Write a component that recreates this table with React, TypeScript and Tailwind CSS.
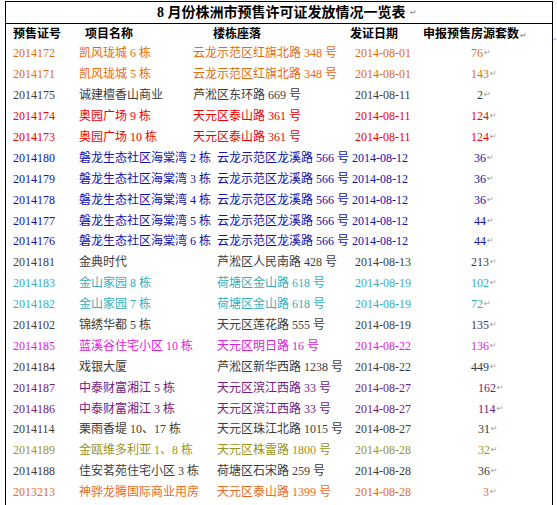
const ORANGE = "text-[#e36c0a]";
const GRAY = "text-[#3c3c3c]";
const RED = "text-[#f00000]";
const BLUE = "text-[#1010b0]";
const TEAL = "text-[#35aebb]";
const PINK = "text-[#e020d8]";
const PURPLE = "text-[#70207a]";
const OLIVE = "text-[#9a9420]";
const ORANGE2 = "text-[#ec6a22]";

// tab stop widths differ per block of rows, like the Word doc they came from
const A = { c2: "w-[114px]", c3: "w-[162px]", c4: "w-[116px]" };
const B = { c2: "w-[138px]", c3: "w-[135px]", c4: "w-[122px]" };
const C = { c2: "w-[138px]", c3: "w-[138px]", c4: "w-[116px]" };
const D = { c2: "w-[138px]", c3: "w-[138px]", c4: "w-[123px]" };

type Row = {
  id: string;
  name: string;
  addr: string;
  date: string;
  n: string;
  color: string;
  tabs: typeof A;
  pad?: string;
};

const rows: Row[] = [
  { id: "2014172", name: "凯风珑城 6 栋", addr: "云龙示范区红旗北路 348 号", date: "2014-08-01", n: "76", color: ORANGE, tabs: A },
  { id: "2014171", name: "凯风珑城 5 栋", addr: "云龙示范区红旗北路 348 号", date: "2014-08-01", n: "143", color: ORANGE, tabs: A },
  { id: "2014175", name: "诚建檀香山商业", addr: "芦淞区东环路 669 号", date: "2014-08-11", n: "2", color: GRAY, tabs: A, pad: "pl-[6px]" },
  { id: "2014174", name: "奥园广场 9 栋", addr: "天元区泰山路 361 号", date: "2014-08-11", n: "124", color: RED, tabs: A },
  { id: "2014173", name: "奥园广场 10 栋", addr: "天元区泰山路 361 号", date: "2014-08-11", n: "124", color: RED, tabs: A },
  { id: "2014180", name: "磐龙生态社区海棠湾 2 栋", addr: "云龙示范区龙溪路 566 号", date: "2014-08-12", n: "36", color: BLUE, tabs: B },
  { id: "2014179", name: "磐龙生态社区海棠湾 3 栋", addr: "云龙示范区龙溪路 566 号", date: "2014-08-12", n: "36", color: BLUE, tabs: B },
  { id: "2014178", name: "磐龙生态社区海棠湾 4 栋", addr: "云龙示范区龙溪路 566 号", date: "2014-08-12", n: "36", color: BLUE, tabs: B },
  { id: "2014177", name: "磐龙生态社区海棠湾 5 栋", addr: "云龙示范区龙溪路 566 号", date: "2014-08-12", n: "44", color: BLUE, tabs: B },
  { id: "2014176", name: "磐龙生态社区海棠湾 6 栋", addr: "云龙示范区龙溪路 566 号", date: "2014-08-12", n: "44", color: BLUE, tabs: B },
  { id: "2014181", name: "金典时代", addr: "芦淞区人民南路 428 号", date: "2014-08-13", n: "213", color: GRAY, tabs: C },
  { id: "2014183", name: "金山家园 8 栋", addr: "荷塘区金山路 618 号", date: "2014-08-19", n: "102", color: TEAL, tabs: C },
  { id: "2014182", name: "金山家园 7 栋", addr: "荷塘区金山路 618 号", date: "2014-08-19", n: "72", color: TEAL, tabs: C },
  { id: "2014102", name: "锦绣华都 5 栋", addr: "天元区莲花路 555 号", date: "2014-08-19", n: "135", color: GRAY, tabs: C },
  { id: "2014185", name: "蓝溪谷住宅小区 10 栋", addr: "天元区明日路 16 号", date: "2014-08-22", n: "136", color: PINK, tabs: C },
  { id: "2014184", name: "戏银大厦", addr: "芦淞区新华西路 1238 号", date: "2014-08-22", n: "449", color: GRAY, tabs: C },
  { id: "2014187", name: "中泰财富湘江 5 栋", addr: "天元区滨江西路 33 号", date: "2014-08-27", n: "162", color: PURPLE, tabs: D },
  { id: "2014186", name: "中泰财富湘江 3 栋", addr: "天元区滨江西路 33 号", date: "2014-08-27", n: "114", color: PURPLE, tabs: D },
  { id: "2014114", name: "栗雨香堤 10、17 栋", addr: "天元区珠江北路 1015 号", date: "2014-08-27", n: "31", color: GRAY, tabs: D },
  { id: "2014189", name: "金瓯维多利亚 1、8 栋", addr: "天元区株雷路 1800 号", date: "2014-08-28", n: "32", color: OLIVE, tabs: D },
  { id: "2014188", name: "佳安茗苑住宅小区 3 栋", addr: "荷塘区石宋路 259 号", date: "2014-08-28", n: "36", color: GRAY, tabs: D },
  { id: "2013213", name: "神骅龙腾国际商业用房", addr: "天元区泰山路 1399 号", date: "2014-08-28", n: "3", color: ORANGE2, tabs: D, pad: "pl-[5px]" },
];

function Mark() {
  return <span className="font-['DejaVu_Sans'] text-[8px] text-[#9a9a9a] ml-[1px]">↵</span>;
}

export default function App() {
  return (
    <div className="w-[557px] h-[505px] overflow-hidden bg-white pt-[1px] flex font-['Liberation_Serif','Noto_Sans_CJK_SC',serif] text-[12px] leading-none">
      <div className="ml-[5px] w-[548px] shrink-0 border-t border-x border-black">
        <div className="h-[22px] border-b border-black flex items-center pl-[151px] pt-[1px] text-[14px] font-bold text-black whitespace-pre">
          8 月份株洲市预售许可证发放情况一览表 <Mark />
        </div>
        <div className="h-[19px] flex items-center font-bold text-black whitespace-pre">
          <div className="w-[79px] pl-[7px]">预售证号</div>
          <div className="w-[128px]">项目名称</div>
          <div className="w-[137px]">楼栋座落</div>
          <div className="w-[73px]">发证日期</div>
          <div>
            申报预售房源套数
            <Mark />
          </div>
        </div>
        {rows.map((r) => (
          <div key={r.id + r.name} className={`h-[20.9px] flex items-center whitespace-pre ${r.color}`}>
            <div className="w-[73px] pl-[7px] shrink-0">{r.id}</div>
            <div className={`${r.tabs.c2} shrink-0`}>{r.name}</div>
            <div className={`${r.tabs.c3} shrink-0`}>{r.addr}</div>
            <div className={`${r.tabs.c4} shrink-0`}>{r.date}</div>
            <div className={`${r.pad ?? ""} flex items-center`}>
              {r.n}
              <Mark />
            </div>
          </div>
        ))}
      </div>
      <div className="pt-[30px] w-[4px] overflow-hidden">
        <span className="font-['DejaVu_Sans'] text-[5px] text-[#9a9a9a]">↵</span>
      </div>
    </div>
  );
}
